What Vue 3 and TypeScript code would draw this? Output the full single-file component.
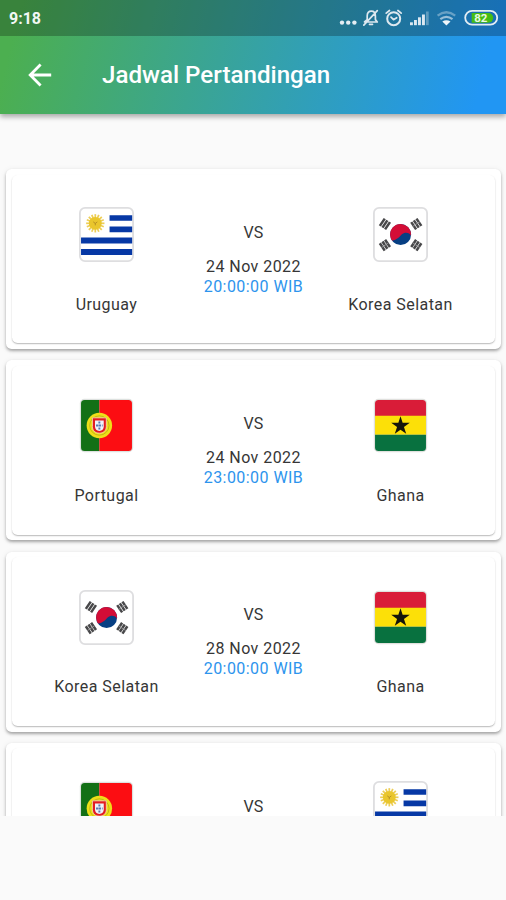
<script setup lang="ts">
type Country = 'uruguay' | 'korea' | 'portugal' | 'ghana'

interface Match {
  home: Country
  away: Country
  date?: string
  time?: string
}

const names: Record<Country, string> = {
  uruguay: 'Uruguay',
  korea: 'Korea Selatan',
  portugal: 'Portugal',
  ghana: 'Ghana',
}

const matches: Match[] = [
  { home: 'uruguay', away: 'korea', date: '24 Nov 2022', time: '20:00:00 WIB' },
  { home: 'portugal', away: 'ghana', date: '24 Nov 2022', time: '23:00:00 WIB' },
  { home: 'korea', away: 'ghana', date: '28 Nov 2022', time: '20:00:00 WIB' },
  { home: 'portugal', away: 'uruguay' },
]

const rays = Array.from({ length: 16 }, (_, i) => i * 22.5)
const trigrams = [
  { x: 11.7, y: 16.7, angle: -56 },
  { x: 42.5, y: 16.7, angle: 56 },
  { x: 11.7, y: 37.5, angle: 56 },
  { x: 42.5, y: 37.5, angle: -56 },
]
</script>

<template>
  <div class="screen">
    <header class="top">
      <div class="status">
        <span class="clock">9:18</span>
        <svg class="status-icons" width="164" height="36" viewBox="0 0 164 36" fill="none">
          <g fill="#e4edf3">
            <circle cx="3" cy="22.6" r="2.2" /><circle cx="9.2" cy="22.6" r="2.2" /><circle cx="15.4" cy="22.6" r="2.2" />
          </g>
          <g stroke="#dde8ef" stroke-width="1.7" stroke-linejoin="round" stroke-linecap="round">
            <path d="M25.5 22h12.800l-1.900-2.400v-3.700c0-3-1.600-4.800-4-4.800s-4.200 1.800-4.200 4.800v3.700zM30.500 24.300h3M24.800 25.200L38.300 10.700" />
            <circle cx="54.700" cy="18.700" r="6.500" stroke-width="2" />
            <path d="M52 17.200l2.500 2.500 3.200-2M47.200 13.200l3.300-2.700M62.200 13.200l-3.300-2.700" />
          </g>
          <g fill="#dce8f1">
            <rect x="71" y="22.300" width="2.900" height="2.900" />
            <rect x="75" y="20" width="2.900" height="5.200" />
            <rect x="79" y="17.300" width="2.900" height="7.900" />
            <rect x="83" y="14.500" width="2.900" height="10.700" />
            <rect x="87" y="11.500" width="2.700" height="13.700" opacity=".35" />
          </g>
          <g stroke="#dce8f1" stroke-width="2.300">
            <path d="M98.600 15.700q8.800-6.800 17.600 0" opacity=".4" />
            <path d="M101.300 19.200q6.100-4.600 12.200 0" opacity=".65" />
          </g>
          <path d="M103.300 21.600q4.100-2.800 8.200 0l-4.100 4z" fill="#eef5fa" />
          <rect x="126.200" y="10.900" width="32" height="13.800" rx="6.900" stroke="#e3edf4" stroke-width="1.800" />
          <path d="M132.700 13h16.700a4.800 4.800 0 0 1 0 9.700H132.700z" fill="#46bd12" />
          <text class="battery" x="141.800" y="21.900" text-anchor="middle">82</text>
        </svg>
      </div>
      <div class="bar">
        <svg class="back" width="24" height="24" viewBox="0 0 24 24">
          <path d="M23.200 12H2.800M12.600 1.600L2.200 12l10.400 10.400" fill="none" stroke="#fff" stroke-width="2.800" />
        </svg>
        <h1>Jadwal Pertandingan</h1>
      </div>
    </header>

    <svg class="defs" width="0" height="0">
      <symbol id="flag-uruguay" viewBox="0 0 54 54">
        <rect x=".9" y=".9" width="52.200" height="52.200" rx="5" fill="#fff" stroke="#dedee0" stroke-width="1.800" />
        <path d="M30 8h22.200v5.600H30zM30 19.100h22.200v5.700H30zM2 30h50.200v5.800H2zM2 41.200h50.200v5.900H2z" fill="#0638a5" />
        <g stroke="#edce57" stroke-width="1.700">
          <path v-for="r in rays" :key="r" d="M16 7v9" :transform="`rotate(${r} 16 16)`" />
        </g>
        <circle cx="16" cy="16" r="6.300" fill="#e9c62d" />
        <path d="M14 14.600l2 1.500 2-1.500M16 16v2" stroke="#ac8524" stroke-width=".8" fill="none" />
      </symbol>
      <symbol id="flag-korea" viewBox="0 0 54 54">
        <rect x=".9" y=".9" width="52.200" height="52.200" rx="5" fill="#fff" stroke="#dedee0" stroke-width="1.800" />
        <circle cx="27.100" cy="27.100" r="10.300" fill="#073f83" />
        <path d="M18.500 32.700a10.300 10.300 0 1 1 18.800-4.300c-1.200-3.300-6-4.200-9.200-1.300-3.400 4-8 6.800-9.600 5.600z" fill="#d30d36" />
        <g v-for="(t, i) in trigrams" :key="i" :transform="`translate(${t.x} ${t.y}) rotate(${t.angle})`" stroke="#48484a" stroke-width="2.500">
          <path d="M-4.300-3.100h8.600M-4.300 0h8.600M-4.300 3.100h8.600" />
          <path v-if="i > 0" d="M0-4.300v8.600" stroke="#98989a" stroke-width=".8" />
        </g>
      </symbol>
      <symbol id="flag-portugal" viewBox="0 0 54 54">
        <rect x=".8" y=".8" width="52.400" height="52.400" rx="4.500" fill="#dde1df" />
        <path d="M5.500 2H20v50H5.500A3.500 3.500 0 0 1 2 48.500v-43A3.500 3.500 0 0 1 5.500 2z" fill="#137016" />
        <path d="M20 2h28.500A3.500 3.500 0 0 1 52 5.500v43a3.500 3.500 0 0 1-3.500 3.500H20z" fill="#fc0d12" />
        <circle cx="20" cy="27" r="12.500" fill="#efdf18" />
        <circle cx="20" cy="27" r="9.500" fill="none" stroke="#b6ad16" stroke-width=".8" />
        <path d="M13.200 19.500h13.600v8.500c0 4-2.700 6.500-6.800 6.500S13.200 32 13.200 28z" fill="#e31b21" stroke="#f6e7d2" stroke-width=".7" />
        <path d="M15.700 22h8.600v6c0 2.500-1.700 4.300-4.300 4.300s-4.300-1.800-4.300-4.300z" fill="#eef2fa" />
        <path d="M20 23v8M16.700 27h6.600" stroke="#5979b4" stroke-width="1.900" stroke-dasharray="2 1" />
      </symbol>
      <symbol id="flag-ghana" viewBox="0 0 54 54">
        <rect x=".8" y=".8" width="52.400" height="52.400" rx="4.500" fill="#e0e0dd" />
        <path d="M5.500 2h43A3.500 3.500 0 0 1 52 5.500V18H2V5.500A3.500 3.500 0 0 1 5.500 2z" fill="#d91c38" />
        <path d="M2 17.500h50v18.700H2z" fill="#fce008" />
        <path d="M2 36h50v12.500a3.500 3.500 0 0 1-3.500 3.500h-43A3.500 3.500 0 0 1 2 48.500z" fill="#08713f" />
        <path d="M27 17.800l2.100 6.600h7l-5.700 4.100 2.200 6.700-5.600-4.100-5.600 4.100 2.200-6.700-5.700-4.100h7z" fill="#14150b" />
      </symbol>
    </svg>

    <main class="list">
      <article v-for="(m, i) in matches" :key="i" class="card">
        <div class="inner">
          <div class="team">
            <svg class="flag" width="55" height="55"><use :href="`#flag-${m.home}`" /></svg>
            <span v-if="m.date">{{ names[m.home] }}</span>
          </div>
          <div class="info">
            <span class="versus">VS</span>
            <span v-if="m.date">{{ m.date }}</span>
            <span v-if="m.time" class="time">{{ m.time }}</span>
          </div>
          <div class="team">
            <svg class="flag" width="55" height="55"><use :href="`#flag-${m.away}`" /></svg>
            <span v-if="m.date">{{ names[m.away] }}</span>
          </div>
        </div>
      </article>
    </main>
  </div>
</template>

<style>
body {
  margin: 0;
  background: #fafafa;
}
</style>

<style scoped>
.screen {
  width: 506px;
  height: 900px;
  overflow: hidden;
  background: #fafafa;
  font-family: Roboto, "Liberation Sans", sans-serif;
}
.top {
  position: relative;
  z-index: 1;
  height: 114px;
  background: linear-gradient(104deg, #4caf50 4%, #2196f3 94%);
  box-shadow: 0 3px 5px rgba(0, 0, 0, 0.32);
}
.status {
  box-sizing: border-box;
  height: 36px;
  display: flex;
  justify-content: space-between;
  padding: 0 3px 0 9px;
  background: rgba(0, 0, 0, 0.25);
}
.clock {
  color: #f2f7f3;
  font-size: 16px;
  font-weight: 700;
  line-height: 38px;
}
.battery {
  fill: #e9f9e2;
  font-size: 11.5px;
  font-weight: 700;
}
.bar {
  height: 78px;
  display: flex;
  align-items: center;
  padding-left: 28px;
  gap: 50px;
}
h1 {
  margin: 0;
  color: #fff;
  font-size: 24.15px;
  font-weight: 500;
  line-height: 30px;
  white-space: nowrap;
}
.defs {
  position: absolute;
}
.list {
  box-sizing: border-box;
  height: 702px;
  overflow: hidden;
  display: flex;
  flex-direction: column;
  gap: 11.3px;
  padding: 55px 5px 0 6px;
}
.card {
  box-sizing: border-box;
  flex: 0 0 180px;
  padding: 5.6px;
  border-radius: 5.6px;
  background: #fff;
  box-shadow: 0 2px 3px rgba(0, 0, 0, 0.3), 0 1px 6px rgba(0, 0, 0, 0.08);
}
.inner {
  box-sizing: border-box;
  height: 168.8px;
  display: grid;
  grid-template-columns: repeat(3, 147px);
  justify-content: center;
  padding-top: 32.4px;
  border-radius: 5.6px;
  background: #fff;
  box-shadow: 0 1px 1.5px rgba(0, 0, 0, 0.28);
}
.team,
.info {
  display: flex;
  flex-direction: column;
  align-items: center;
  color: #363636;
  font-size: 16px;
  line-height: 19.7px;
  letter-spacing: 0.45px;
  white-space: nowrap;
}
.team {
  gap: 32.8px;
}
.flag {
  display: block;
}
.info {
  padding-top: 15.8px;
}
.versus {
  margin-bottom: 14.4px;
  letter-spacing: 0.2px;
}
.time {
  color: #2d94ed;
}
</style>
